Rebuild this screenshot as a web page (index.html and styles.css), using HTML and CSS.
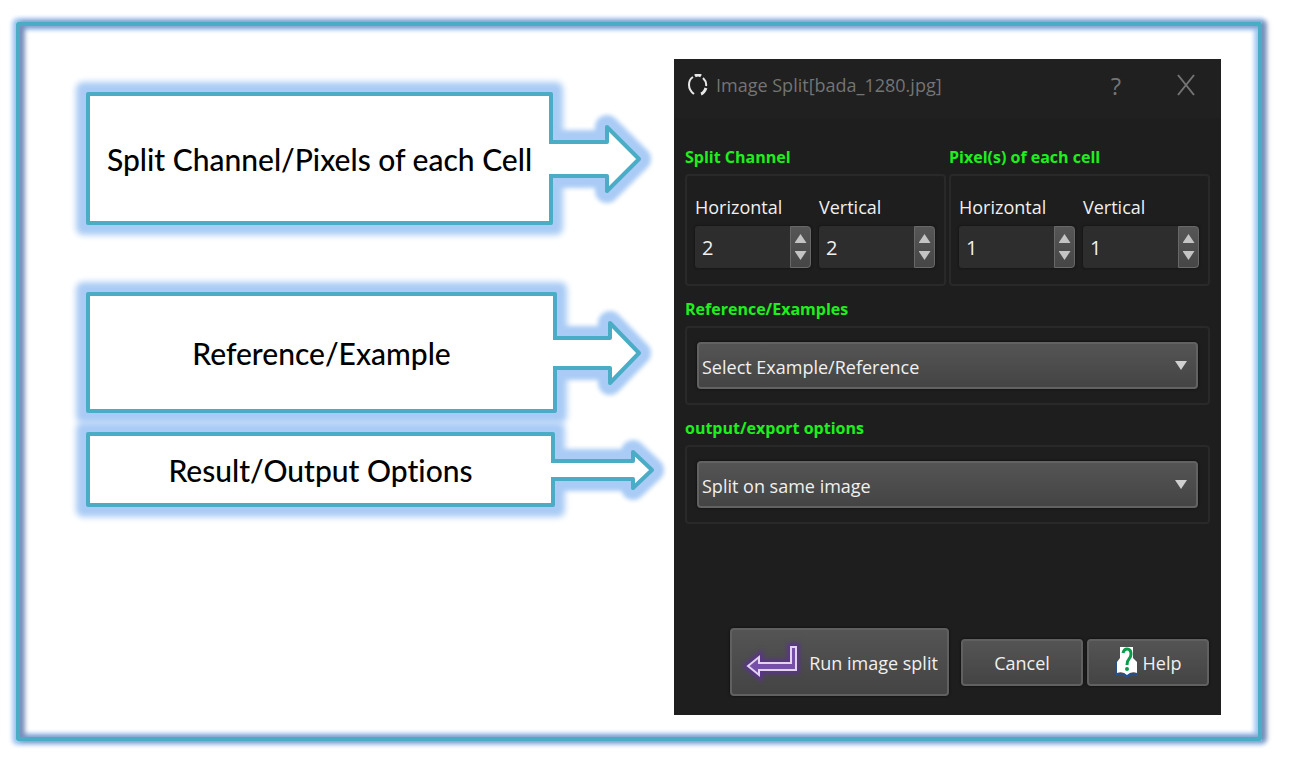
FILE: index.html
```html
<!DOCTYPE html>
<html lang="en">
<head>
  <meta charset="UTF-8" />
  <meta name="viewport" content="width=device-width, initial-scale=1.0"/>
  <title>Image Split</title>
  <link rel="stylesheet" href="styles.css">
</head>
<body>
  <div class="frame">
    <div class="callouts">
      <div class="callout callout-split">
        <div class="callout-box">Split Channel/Pixels of each Cell</div>
        <svg class="arrow" width="94" height="72" viewBox="0 0 94 72">
          <path class="arrow-glow" d="M2 19H58V4L90 36L58 68V53H2"/>
          <path class="arrow-fill" d="M0 19H58V4L90 36L58 68V53H0Z"/>
          <path class="arrow-line" d="M0 19H58V4L90 36L58 68V53H0"/>
        </svg>
      </div>
      <div class="callout callout-reference">
        <div class="callout-box">Reference/Example</div>
        <svg class="arrow" width="90" height="66" viewBox="0 0 90 66">
          <path class="arrow-glow" d="M2 18H57V3L86 33L57 63V48H2"/>
          <path class="arrow-fill" d="M0 18H57V3L86 33L57 63V48H0Z"/>
          <path class="arrow-line" d="M0 18H57V3L86 33L57 63V48H0"/>
        </svg>
      </div>
      <div class="callout callout-output">
        <div class="callout-box">Result/Output Options</div>
        <svg class="arrow" width="106" height="44" viewBox="0 0 106 44">
          <path class="arrow-glow" d="M2 13H82V4L101 22L82 40V31H2"/>
          <path class="arrow-fill" d="M0 13H82V4L101 22L82 40V31H0Z"/>
          <path class="arrow-line" d="M0 13H82V4L101 22L82 40V31H0"/>
        </svg>
      </div>
    </div>

    <div class="dialog">
      <div class="titlebar">
        <svg class="app-icon" width="20" height="22" viewBox="0 0 20 22">
          <path d="M6 20C-1 15 0 6 5 3" stroke-width="2"/>
          <path d="M7 2Q10 0 13 2" stroke-width="3"/>
          <path d="M15 4Q19 8 18 12" stroke-width="2"/>
          <path d="M18 14Q16 19 13 20" stroke-width="3"/>
        </svg>
        <span class="title">Image Split[bada_1280.jpg]</span>
        <button class="title-button" type="button">?</button>
        <button class="title-button" type="button" aria-label="Close">
          <svg width="18" height="22" viewBox="0 0 18 22"><path d="M1 1L17 21M17 1L1 21"/></svg>
        </button>
      </div>

      <form class="content">
        <div class="columns">
          <section>
            <h2>Split Channel</h2>
            <div class="group spins">
              <div>
                <label for="splitH">Horizontal</label>
                <div class="spin">
                  <input type="number" id="splitH" value="2" />
                  <div class="steps">
                    <button type="button" class="up" aria-label="Increase"></button>
                    <button type="button" class="down" aria-label="Decrease"></button>
                  </div>
                </div>
              </div>
              <div>
                <label for="splitV">Vertical</label>
                <div class="spin">
                  <input type="number" id="splitV" value="2" />
                  <div class="steps">
                    <button type="button" class="up" aria-label="Increase"></button>
                    <button type="button" class="down" aria-label="Decrease"></button>
                  </div>
                </div>
              </div>
            </div>
          </section>
          <section>
            <h2>Pixel(s) of each cell</h2>
            <div class="group spins">
              <div>
                <label for="cellH">Horizontal</label>
                <div class="spin">
                  <input type="number" id="cellH" value="1" />
                  <div class="steps">
                    <button type="button" class="up" aria-label="Increase"></button>
                    <button type="button" class="down" aria-label="Decrease"></button>
                  </div>
                </div>
              </div>
              <div>
                <label for="cellV">Vertical</label>
                <div class="spin">
                  <input type="number" id="cellV" value="1" />
                  <div class="steps">
                    <button type="button" class="up" aria-label="Increase"></button>
                    <button type="button" class="down" aria-label="Decrease"></button>
                  </div>
                </div>
              </div>
            </div>
          </section>
        </div>

        <section>
          <h2><label for="reference">Reference/Examples</label></h2>
          <div class="group">
            <div class="select">
              <select id="reference">
                <option>Select Example/Reference</option>
              </select>
            </div>
          </div>
        </section>

        <section>
          <h2><label for="output">output/export options</label></h2>
          <div class="group">
            <div class="select">
              <select id="output">
                <option>Split on same image</option>
              </select>
            </div>
          </div>
        </section>

        <div class="footer">
          <button type="button" class="button run">
            <svg class="enter-icon" width="54" height="36" viewBox="0 0 54 36">
              <path class="enter-glow" d="M3 21L14 12V18H46V2H51V25H14V30Z"/>
              <path class="enter-shape" d="M3 21L14 12V18H46V2H51V25H14V30Z"/>
            </svg>
            Run image split
          </button>
          <button type="button" class="button">Cancel</button>
          <button type="button" class="button">
            <svg width="24" height="34" viewBox="0 0 24 34">
              <path d="M1 15H3V28H21V15H23V30Q17 28 12 32Q7 28 1 30Z" fill="#25508c"/>
              <path d="M5 1H18V12L22 16V27Q16 25 12 29Q8 25 2 27V16L5 12Z" fill="#fff"/>
              <path d="M8 7Q9 3 12 3Q16 3 16 8Q16 11 14 13Q12 15 12 19" fill="none" stroke="#0a9c4b" stroke-width="3"/>
              <circle cx="12" cy="23" r="2" fill="#0a9c4b"/>
            </svg>
            Help
          </button>
        </div>
      </form>
    </div>
  </div>
</body>
</html>
```
FILE: styles.css
```css
* {
  box-sizing: border-box;
}
body {
  margin: 0;
  padding: 22px 28px 22px 16px;
  background: #fff;
  font-family: "Open Sans", "Noto Sans", sans-serif;
}
.frame {
  display: grid;
  grid-template-columns: minmax(0, 588fr) minmax(0, 547fr);
  min-height: calc(100vh - 44px);
  padding: 33px 37px 22px 66px;
  border: 4px solid #4bacc6;
  border-radius: 2px;
  box-shadow: 4px 0 5px 1px rgba(40,50,100,0.4), 0 0 4px 4px #a9cbf5,
    inset 4px 0 5px 1px rgba(40,50,100,0.4), inset 0 0 4px 4px #a9cbf5;
}

/* callouts */
.callouts {
  padding-top: 33px;
}
.callout {
  display: flex;
  align-items: center;
  margin-right: 31px;
}
.callout-box {
  flex: 1;
  display: flex;
  align-items: center;
  justify-content: center;
  border: 4px solid #4bacc6;
  border-radius: 2px;
  background: #fff;
  box-shadow: 0 0 6px 10px #a9cbf5;
  color: #000;
  font-family: Lato, sans-serif;
  font-size: 30px;
  font-weight: 500;
  font-variant-ligatures: none;
  line-height: 36px;
}
.callout-split .callout-box {
  min-height: 133px;
}
.callout-reference {
  margin-top: 67px;
}
.callout-reference .callout-box {
  min-height: 121px;
}
.callout-output {
  margin-top: 19px;
  margin-right: 17px;
}
.callout-output .callout-box {
  min-height: 75px;
}
.arrow {
  flex: none;
  margin-left: -4px;
  overflow: visible;
}
.arrow path {
  fill: none;
  stroke-linejoin: round;
}
.arrow .arrow-glow {
  stroke: #a9cbf5;
  stroke-width: 24px;
  filter: blur(2px);
  clip-path: inset(-30px -30px -30px 2px);
}
.arrow .arrow-fill {
  fill: #fff;
}
.arrow .arrow-line {
  stroke: #4bacc6;
  stroke-width: 4px;
}

/* dialog */
.dialog {
  display: flex;
  flex-direction: column;
  background: #1e1e1e;
  color: #f0f0f0;
  font-size: 18px;
}
.titlebar {
  display: flex;
  align-items: center;
  height: 59px;
  padding: 0 24px 7px 14px;
  background: #202020;
  color: #747474;
}
.app-icon {
  fill: none;
  stroke: #e8e8e8;
}
.title {
  flex: 1;
  margin-left: 8px;
}
.title-button {
  width: 22px;
  margin-left: 48px;
  padding: 0;
  border: none;
  background: none;
  color: #747474;
  font: inherit;
  font-size: 24px;
  cursor: pointer;
}
.title-button svg {
  display: block;
  margin: auto;
  stroke: #747474;
  stroke-width: 2px;
}
.content {
  flex: 1;
  display: flex;
  flex-direction: column;
  gap: 11px;
  padding: 27px 11px 19px;
}
.columns {
  display: grid;
  grid-template-columns: 1fr 1fr;
  gap: 3px;
}
h2 {
  margin: 0 0 5px;
  color: #1df01d;
  font-size: 16px;
  font-weight: bold;
  line-height: 24px;
}
.group {
  padding: 14px 10px;
  border: 2px solid #292929;
  border-radius: 4px;
}
.spins {
  display: grid;
  grid-template-columns: 1fr 1fr;
  gap: 8px;
  padding: 19px 9px 16px 8px;
}
.spins label {
  display: block;
  margin-bottom: 7px;
  line-height: 24px;
}
.spin {
  display: flex;
  height: 42px;
  border-radius: 3px;
  background: #2d2d2d;
  box-shadow: 0 0 2px 1px #181818;
}
.spin input {
  flex: 1;
  width: 100%;
  min-width: 0;
  padding: 0 7px;
  border: none;
  background: none;
  color: #f0f0f0;
  font: inherit;
  font-size: 20px;
  appearance: textfield;
}
.spin input::-webkit-inner-spin-button {
  appearance: none;
}
.steps {
  flex: none;
  display: flex;
  flex-direction: column;
  justify-content: center;
  gap: 8px;
  width: 21px;
  border: 1px solid #686868;
  border-radius: 0 4px 4px 0;
  background: linear-gradient(#565656, #464646);
}
.steps button {
  width: 12px;
  height: 9px;
  margin: 0 auto;
  padding: 0;
  border: none;
  background: #c4c4c4;
  cursor: pointer;
}
.up {
  clip-path: polygon(50% 0, 100% 100%, 0 100%);
}
.down {
  clip-path: polygon(0 0, 100% 0, 50% 100%);
}
.select {
  display: flex;
  align-items: center;
  height: 47px;
  border: 2px solid #626262;
  border-radius: 4px;
  background: linear-gradient(#545454, #444);
  box-shadow: 0 0 2px 1px #151515;
}
.select::after {
  content: "";
  width: 12px;
  height: 9px;
  margin-right: 9px;
  background: #d0d0d0;
  clip-path: polygon(0 0, 100% 0, 50% 100%);
}
.select select {
  flex: 1;
  min-width: 0;
  height: 43px;
  padding: 2px 3px 0;
  border: none;
  background: none;
  color: #f0f0f0;
  font: inherit;
  appearance: none;
}
.footer {
  display: flex;
  align-items: center;
  justify-content: flex-end;
  gap: 4px;
  margin-top: auto;
  padding-right: 1px;
}
.button {
  display: flex;
  align-items: center;
  justify-content: center;
  gap: 4px;
  width: 122px;
  height: 47px;
  padding: 2px 0 0;
  border: 2px solid #606060;
  border-radius: 4px;
  background: linear-gradient(#545454, #444);
  box-shadow: 0 0 2px 1px #151515;
  color: #f0f0f0;
  font: inherit;
  cursor: pointer;
}
.button.run {
  gap: 10px;
  width: 219px;
  height: 68px;
  margin-right: 8px;
  padding-left: 4px;
}
.enter-icon {
  overflow: visible;
}
.enter-glow {
  fill: none;
  stroke: #5b3290;
  stroke-width: 7px;
  filter: blur(2px);
}
.enter-shape {
  fill: #7650a8;
  stroke: #e2d4ee;
  stroke-width: 2px;
}
```
